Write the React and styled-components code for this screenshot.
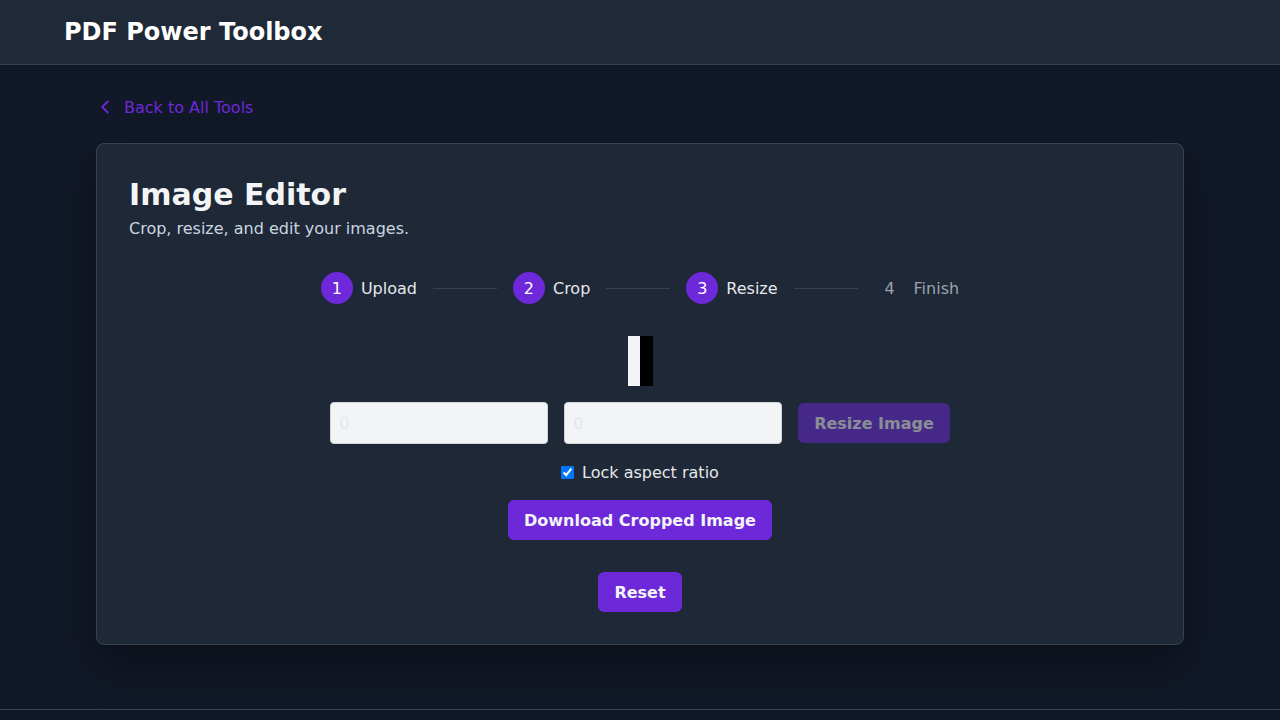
import React from 'react'
import styled, { createGlobalStyle } from 'styled-components'
import { ChevronLeft } from 'lucide-react'

const GlobalStyle = createGlobalStyle`
  html, body {
    margin: 0;
    padding: 0;
    background: #111827;
    font-family: "DejaVu Sans", "Noto Sans", sans-serif;
    color: #f3f4f6;
  }
  * { box-sizing: border-box; }
`;

const Header = styled.header`
  height: 65px;
  background: #1f2937;
  border-bottom: 1px solid #374151;
  display: flex;
  align-items: center;
  padding: 0 64px;
`;

const Brand = styled.h1`
  margin: 0;
  font-size: 24px;
  font-weight: 700;
  color: #ffffff;
`;

const Main = styled.main`
  max-width: 1152px;
  margin: 0 auto;
  padding: 32px 32px 64px;
`;

const BackLink = styled.a`
  display: flex;
  width: fit-content;
  align-items: center;
  gap: 8px;
  height: 20px;
  margin-left: -2px;
  margin-bottom: 26px;
  color: #6d28d9;
  font-size: 16px;
  text-decoration: none;
  cursor: pointer;
`;

const Card = styled.section`
  background: #1e2836;
  border: 1px solid #374151;
  border-radius: 8px;
  padding: 32px;
  box-shadow: 0 20px 40px rgba(0, 0, 0, 0.35);
  display: flex;
  flex-direction: column;
`;

const Title = styled.h2`
  margin: 1px 0 0;
  font-size: 30px;
  line-height: 36px;
  font-weight: 700;
  color: #f3f4f6;
`;

const Subtitle = styled.p`
  margin: 4px 0 0;
  font-size: 16px;
  line-height: 24px;
  color: #cbd5e1;
`;

const Stepper = styled.div`
  margin-top: 31px;
  display: flex;
  justify-content: center;
  align-items: center;
  gap: 16px;
`;

const Step = styled.div`
  display: flex;
  align-items: center;
  gap: 8px;
`;

const StepNumber = styled.span`
  width: 32px;
  height: 32px;
  border-radius: 50%;
  display: flex;
  align-items: center;
  justify-content: center;
  font-size: 16px;
  background: ${p => (p.$active ? '#6d28d9' : 'transparent')};
  color: ${p => (p.$active ? '#ffffff' : '#9ca3af')};
`;

const StepLabel = styled.span`
  font-size: 16px;
  color: ${p => (p.$active ? '#e5e7eb' : '#9ca3af')};
`;

const Connector = styled.div`
  width: 64px;
  height: 1px;
  background: #374151;
`;

const Preview = styled.div`
  margin: 32px auto 0;
  width: 25px;
  height: 50px;
  display: flex;
`;

const PreviewHalf = styled.div`
  flex: 1;
  background: ${p => p.$tone};
`;

const ResizeRow = styled.div`
  margin-top: 16px;
  display: flex;
  justify-content: center;
  align-items: center;
  gap: 16px;
`;

const SizeInput = styled.input`
  width: 218px;
  height: 42px;
  padding: 8px;
  border: 1px solid #d1d5db;
  border-radius: 4px;
  background: #f3f4f6;
  font-family: inherit;
  font-size: 16px;
  color: #111827;
  &::placeholder { color: #e5e7eb; }
`;

const Button = styled.button`
  height: 40px;
  padding: 0 16px;
  border: none;
  border-radius: 6px;
  background: #6d28d9;
  color: #f3f4f6;
  font-family: inherit;
  font-size: 16px;
  font-weight: 700;
  cursor: pointer;
  opacity: ${p => (p.disabled ? 0.5 : 1)};
  align-self: center;
  margin-top: ${p => p.$top || 0}px;
`;

const CheckRow = styled.label`
  margin-top: 16px;
  height: 24px;
  display: flex;
  justify-content: center;
  align-items: center;
  gap: 8px;
  font-size: 16px;
  color: #e5e7eb;
  input { margin: 0; width: 13px; height: 13px; }
`;

const Footer = styled.footer`
  border-top: 1px solid #374151;
  height: 60px;
`;

const steps = [
  { n: 1, label: 'Upload', active: true },
  { n: 2, label: 'Crop', active: true },
  { n: 3, label: 'Resize', active: true },
  { n: 4, label: 'Finish', active: false },
];

export default function App() {
  return (
    <>
      <GlobalStyle />
      <Header>
        <Brand>PDF Power Toolbox</Brand>
      </Header>
      <Main>
        <BackLink>
          <ChevronLeft size={22} strokeWidth={2} />
          Back to All Tools
        </BackLink>
        <Card>
          <Title>Image Editor</Title>
          <Subtitle>Crop, resize, and edit your images.</Subtitle>
          <Stepper>
            {steps.map((s, i) => (
              <React.Fragment key={s.n}>
                <Step>
                  <StepNumber $active={s.active}>{s.n}</StepNumber>
                  <StepLabel $active={s.active}>{s.label}</StepLabel>
                </Step>
                {i < steps.length - 1 && <Connector />}
              </React.Fragment>
            ))}
          </Stepper>
          <Preview>
            <PreviewHalf $tone="#f3f4f6" />
            <PreviewHalf $tone="#000000" />
          </Preview>
          <ResizeRow>
            <SizeInput type="number" placeholder="0" />
            <SizeInput type="number" placeholder="0" />
            <Button disabled>Resize Image</Button>
          </ResizeRow>
          <CheckRow>
            <input type="checkbox" defaultChecked />
            Lock aspect ratio
          </CheckRow>
          <Button $top={16}>Download Cropped Image</Button>
          <Button $top={32}>Reset</Button>
        </Card>
      </Main>
      <Footer />
    </>
  )
}
